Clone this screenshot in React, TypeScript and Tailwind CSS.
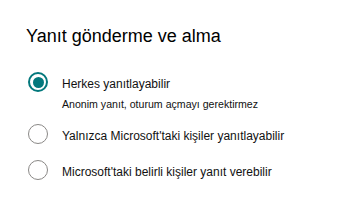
import { useState } from 'react';

const options = [
  { id: 'all', label: 'Herkes yanıtlayabilir', hint: 'Anonim yanıt, oturum açmayı gerektirmez' },
  { id: 'org', label: "Yalnızca Microsoft'taki kişiler yanıtlayabilir" },
  { id: 'some', label: "Microsoft'taki belirli kişiler yanıt verebilir" },
];

function Radio({ checked }: { checked: boolean }) {
  if (checked) {
    return (
      <span className="w-[20px] h-[20px] shrink-0 rounded-full border-[2.5px] border-[#03787c] flex items-center justify-center">
        <span className="w-[11px] h-[11px] rounded-full bg-[#03787c]" />
      </span>
    );
  }
  return <span className="w-[20px] h-[20px] shrink-0 rounded-full border-[1.5px] border-[#8a8886]" />;
}

export default function App() {
  const [value, setValue] = useState('all');

  return (
    <div className="w-[361px] h-[213px] bg-white pl-[26px] pt-[26px] font-['Liberation_Sans',Arial,sans-serif] text-[#201f1e]">
      <h2 className="text-[18px] leading-[20px] text-[#000]">Yanıt gönderme ve alma</h2>

      <div className="flex flex-col mt-[26px] pl-[2px]">
        {options.map((o, i) => (
          <button
            key={o.id}
            onClick={() => setValue(o.id)}
            className={`flex items-start gap-[14px] text-left ${i === 1 ? 'mt-[12px]' : ''} ${i === 2 ? 'mt-[16px]' : ''}`}
          >
            <Radio checked={value === o.id} />
            <span className="flex flex-col mt-[4px]">
              <span className="text-[12px] leading-[16px] text-[#111]">{o.label}</span>
              {o.hint && <span className="text-[10.6px] leading-[16px] mt-[4px] text-[#111]">{o.hint}</span>}
            </span>
          </button>
        ))}
      </div>
    </div>
  );
}
